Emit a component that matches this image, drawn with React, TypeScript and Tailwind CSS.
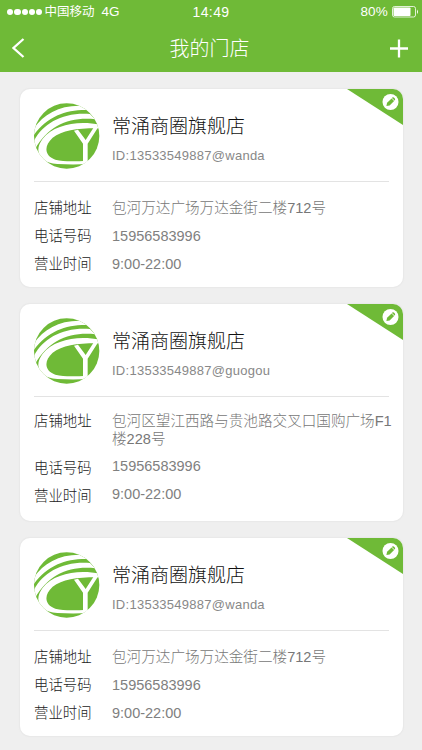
type storeType = {
    name: string;
    id: string;
    address: string;
    phone: string;
    hours: string;
    tall?: boolean;
}

const stores: storeType[] = [
    { name: "常涌商圈旗舰店", id: "13533549887@wanda", address: "包河万达广场万达金街二楼712号", phone: "15956583996", hours: "9:00-22:00" },
    { name: "常涌商圈旗舰店", id: "13533549887@guogou", address: "包河区望江西路与贵池路交叉口国购广场F1楼228号", phone: "15956583996", hours: "9:00-22:00", tall: true },
    { name: "常涌商圈旗舰店", id: "13533549887@wanda", address: "包河万达广场万达金街二楼712号", phone: "15956583996", hours: "9:00-22:00" },
]

const Logo = () => (
    <svg className="w-[66px] h-[66px] shrink-0" viewBox="6 5 198 198">
        <defs>
            <clipPath id="disc">
                <circle cx="104" cy="104" r="98" />
            </clipPath>
        </defs>
        <circle cx="104" cy="104" r="98" fill="#6fba37" />
        <g clipPath="url(#disc)" fill="#fff">
            <path d="M4 84C32 40 80 12 145 13L168 26C104 24 46 44 4 103Z" />
            <path d="M4 122C32 66 92 32 174 38L190 54C112 46 50 72 9 144Z" />
            <path d="M206 71C140 56 66 70 32 112C5 148 20 184 76 188C108 190 140 190 167 188L167 178C130 180 98 182 70 175C38 165 34 134 62 109C92 86 140 80 206 81Z" />
            <path d="M126 88L138 85L161 116L184 80L197 80L167 127L167 186L153 186L153 127Z" />
        </g>
    </svg>
)

const StatusBar = () => (
    <div className="h-6 flex items-center relative text-[13.5px] text-white">
        <div className="flex gap-[1px] pl-[7px]">
            {[0, 1, 2, 3, 4].map((dot) => (
                <span key={dot} className="w-[6.3px] h-[6.3px] rounded-full bg-white" />
            ))}
        </div>
        <span className="ml-[2px] text-[12.5px]">中国移动</span>
        <span className="ml-[7px]">4G</span>
        <span className="absolute inset-x-0 text-center text-[14px] tracking-[0.4px]">14:49</span>
        <span className="ml-auto mr-[4px] tracking-[0.2px]">80%</span>
        <svg className="w-[27px] h-3 mr-[3px]" viewBox="0 0 27 12">
            <rect x="0.5" y="0.5" width="23" height="10.5" rx="2" fill="none" stroke="#fff" strokeOpacity="0.8" />
            <rect x="1.5" y="1.5" width="17" height="8.5" rx="0.8" fill="#fff" />
            <path d="M25 3.5Q27 5.8 25 8Z" fill="#fff" />
        </svg>
    </div>
)

const Header = () => (
    <header className="h-[72px] bg-[#6fba37]">
        <StatusBar />
        <div className="h-12 flex items-center justify-between pl-3 pr-[13px] text-white">
            <svg className="w-[14px] h-5" viewBox="0 0 14 20" fill="none" stroke="#fff" strokeWidth="2.3">
                <path d="M11.5 1L1.5 10L11.5 19" />
            </svg>
            <h1 className="text-[20px] font-light pl-[4px] pt-[1px]">我的门店</h1>
            <svg className="w-5 h-5" viewBox="0 0 20 20" stroke="#fff" strokeWidth="2.3">
                <path d="M1 10.5H19M10 1.5V19.5" />
            </svg>
        </div>
    </header>
)

const EditCorner = () => (
    <svg className="absolute top-0 right-0 w-[56px] h-9" viewBox="0 0 56 36">
        <path d="M0 0H56V36Z" fill="#6fba37" />
        <circle cx="43.5" cy="13" r="8" fill="#fff" />
        <g transform="translate(43.5 13) rotate(45)" fill="#6fba37">
            <path d="M-1.8 -4.4Q-1.8 -5.6 0 -5.6T1.8 -4.4V-3.9H-1.8Z" />
            <path d="M-1.8 -3.3H1.8V3L0 5.8L-1.8 3Z" />
        </g>
    </svg>
)

const StoreCard = ({ name, id, address, phone, hours, tall }: storeType) => {

    return (
        <section className={`relative overflow-hidden rounded-[10px] bg-white shadow-[0_0_1px_1px_#e8e8e8] ${tall ? "h-[217px]" : "h-[198px]"}`}>
            <EditCorner />
            <div className="mx-[14px] h-[93px] border-b border-[#e3e3e3] flex pt-[14px]">
                <Logo />
                <div className="ml-[12px]">
                    <h2 className="mt-[10px] text-[19px] leading-[28px] font-light text-[#111]">{name}</h2>
                    <p className="mt-[5px] text-[13px] leading-[20px] tracking-[0.26px] text-[#888]">ID:{id}</p>
                </div>
            </div>
            <div className={`ml-[14px] mr-[9px] grid grid-cols-[78px_1fr] text-[14.4px] leading-[18px] text-[#808080] ${tall ? "pt-[15px]" : "pt-[17px]"}`}>
                <span className="font-light text-[#222]">店铺地址</span>
                <span className="font-light text-[14.6px] text-[#777]">{address}</span>
                <span className={`font-light text-[#222] ${tall ? "mt-[11px]" : "mt-[10px]"}`}>电话号码</span>
                <span className={`text-[14.5px] ${tall ? "mt-[9px]" : "mt-[10px]"}`}>{phone}</span>
                <span className="mt-[10px] font-light text-[#222]">营业时间</span>
                <span className={`text-[14.5px] ${tall ? "mt-[8px]" : "mt-[10px]"}`}>{hours}</span>
            </div>
        </section>
    )
}

const App = () => {

    return (
        <div className="w-[422px] h-[750px] overflow-hidden bg-[#efefef] font-['Liberation_Sans','Noto_Sans_CJK_SC',sans-serif]">
            <Header />
            <main className="pt-[17px] pl-5 pr-[19px] flex flex-col gap-[17px]">
                {stores.map((store, index) => (
                    <StoreCard key={index} {...store} />
                ))}
            </main>
        </div>
    )
}

export default App
